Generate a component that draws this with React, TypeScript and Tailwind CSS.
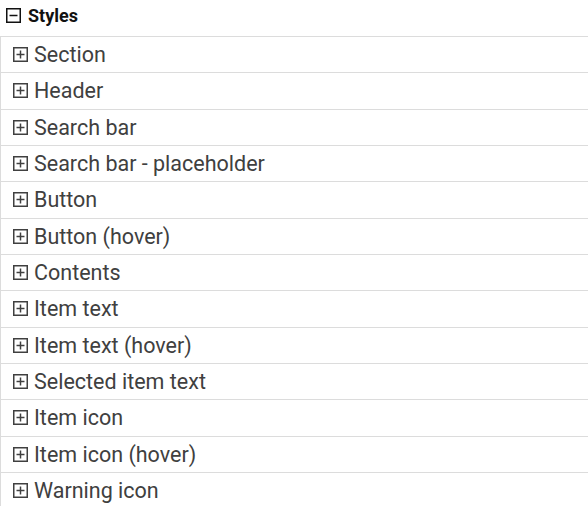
import React from 'react';

const items = [
  'Section',
  'Header',
  'Search bar',
  'Search bar - placeholder',
  'Button',
  'Button (hover)',
  'Contents',
  'Item text',
  'Item text (hover)',
  'Selected item text',
  'Item icon',
  'Item icon (hover)',
  'Warning icon',
];

// square box with a plus or minus inside
const BoxIcon: React.FC<{ plus?: boolean }> = ({ plus }) => (
  <svg width="15" height="15" viewBox="0 0 15 15" className="shrink-0">
    <rect x="0.75" y="0.75" width="13.5" height="13.5" fill="none" stroke="currentColor" strokeWidth="1.5" />
    <line x1="3.5" y1="7.5" x2="11.5" y2="7.5" stroke="currentColor" strokeWidth="1.5" />
    {plus && <line x1="7.5" y1="3.5" x2="7.5" y2="11.5" stroke="currentColor" strokeWidth="1.5" />}
  </svg>
);

export default function App() {
  return (
    <div className="w-[588px] h-[506px] overflow-hidden bg-white font-['Roboto',sans-serif]">
      {/* Group header */}
      <div className="h-[37px] flex items-center gap-[7px] pl-[6px] pb-[5px] border-b border-[#dcdcdc] text-[#111]">
        <BoxIcon />
        <span className="text-[18px] font-bold leading-none">Styles</span>
      </div>

      {/* Collapsed entries */}
      <div className="border-l border-[#dcdcdc]">
        {items.map(item => (
          <div
            key={item}
            className="h-[36.33px] flex items-center gap-[6px] pl-[12px] border-b border-[#dcdcdc] text-[#404040]"
          >
            <BoxIcon plus />
            <span className="text-[21.5px] leading-none">{item}</span>
          </div>
        ))}
      </div>
    </div>
  );
}
